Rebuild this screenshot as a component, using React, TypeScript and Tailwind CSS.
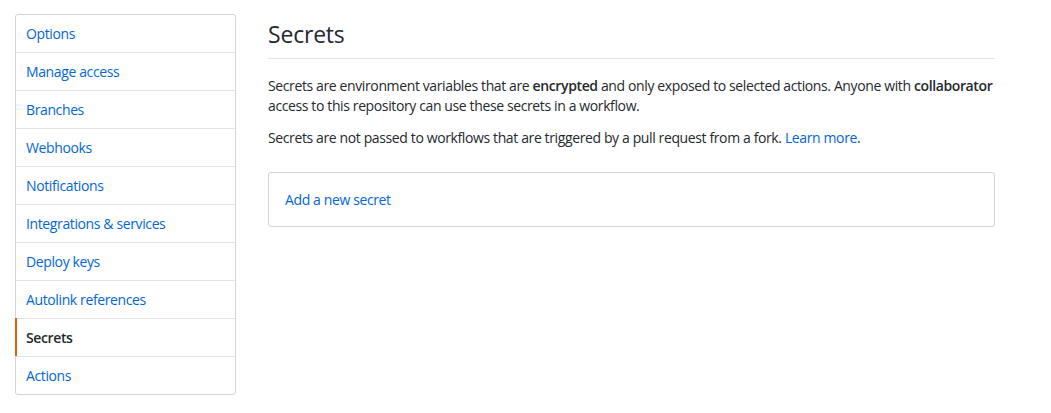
import React from "react";

const items = [
  "Options",
  "Manage access",
  "Branches",
  "Webhooks",
  "Notifications",
  "Integrations & services",
  "Deploy keys",
  "Autolink references",
  "Secrets",
  "Actions",
];

export default function App() {
  return (
    <div
      className="min-h-[413px] bg-white text-[14px] text-[#24292e] tracking-[-0.38px]"
      style={{ fontFamily: '"Open Sans", "Noto Sans", sans-serif' }}
    >
      <div className="flex pl-[15px] pt-[14px]">
        <nav className="w-[221px] shrink-0 self-start rounded-[3px] border border-[#d1d5da]">
          {items.map((it, i) => {
            const active = it === "Secrets";
            return (
              <div
                key={it}
                className={`relative flex items-center px-[10px] leading-[20px] ${
                  i > 0 ? "h-[38px] border-t border-[#e1e4e8]" : "h-[37px]"
                } ${active ? "font-semibold text-[#24292e]" : "text-[#0366d6]"}`}
              >
                {active && (
                  <span className="absolute -left-px -top-px bottom-0 w-[2px] bg-[#e36209]" />
                )}
                {it}
              </div>
            );
          })}
        </nav>
        <main className="ml-[32px] w-[727px]">
          <div className="border-b border-[#e1e4e8] pb-[8px] pt-[4px]">
            <h2 className="text-[23px] font-normal leading-[32px] tracking-[-0.2px]">Secrets</h2>
          </div>
          <p className="mt-[17px] mr-[-6px] leading-[20px]">
            Secrets are environment variables that are <strong className="font-semibold">encrypted</strong> and only
            exposed to selected actions. Anyone with <strong className="font-semibold">collaborator</strong> access to
            this repository can use these secrets in a workflow.
          </p>
          <p className="mt-[12px] leading-[20px]">
            Secrets are not passed to workflows that are triggered by a pull request from a fork.{" "}
            <span className="text-[#0366d6]">Learn more</span>.
          </p>
          <div className="mt-[24px] flex h-[55px] items-center rounded-[3px] border border-[#d1d5da] px-[16px] text-[#0366d6]">
            Add a new secret
          </div>
        </main>
      </div>
    </div>
  );
}
